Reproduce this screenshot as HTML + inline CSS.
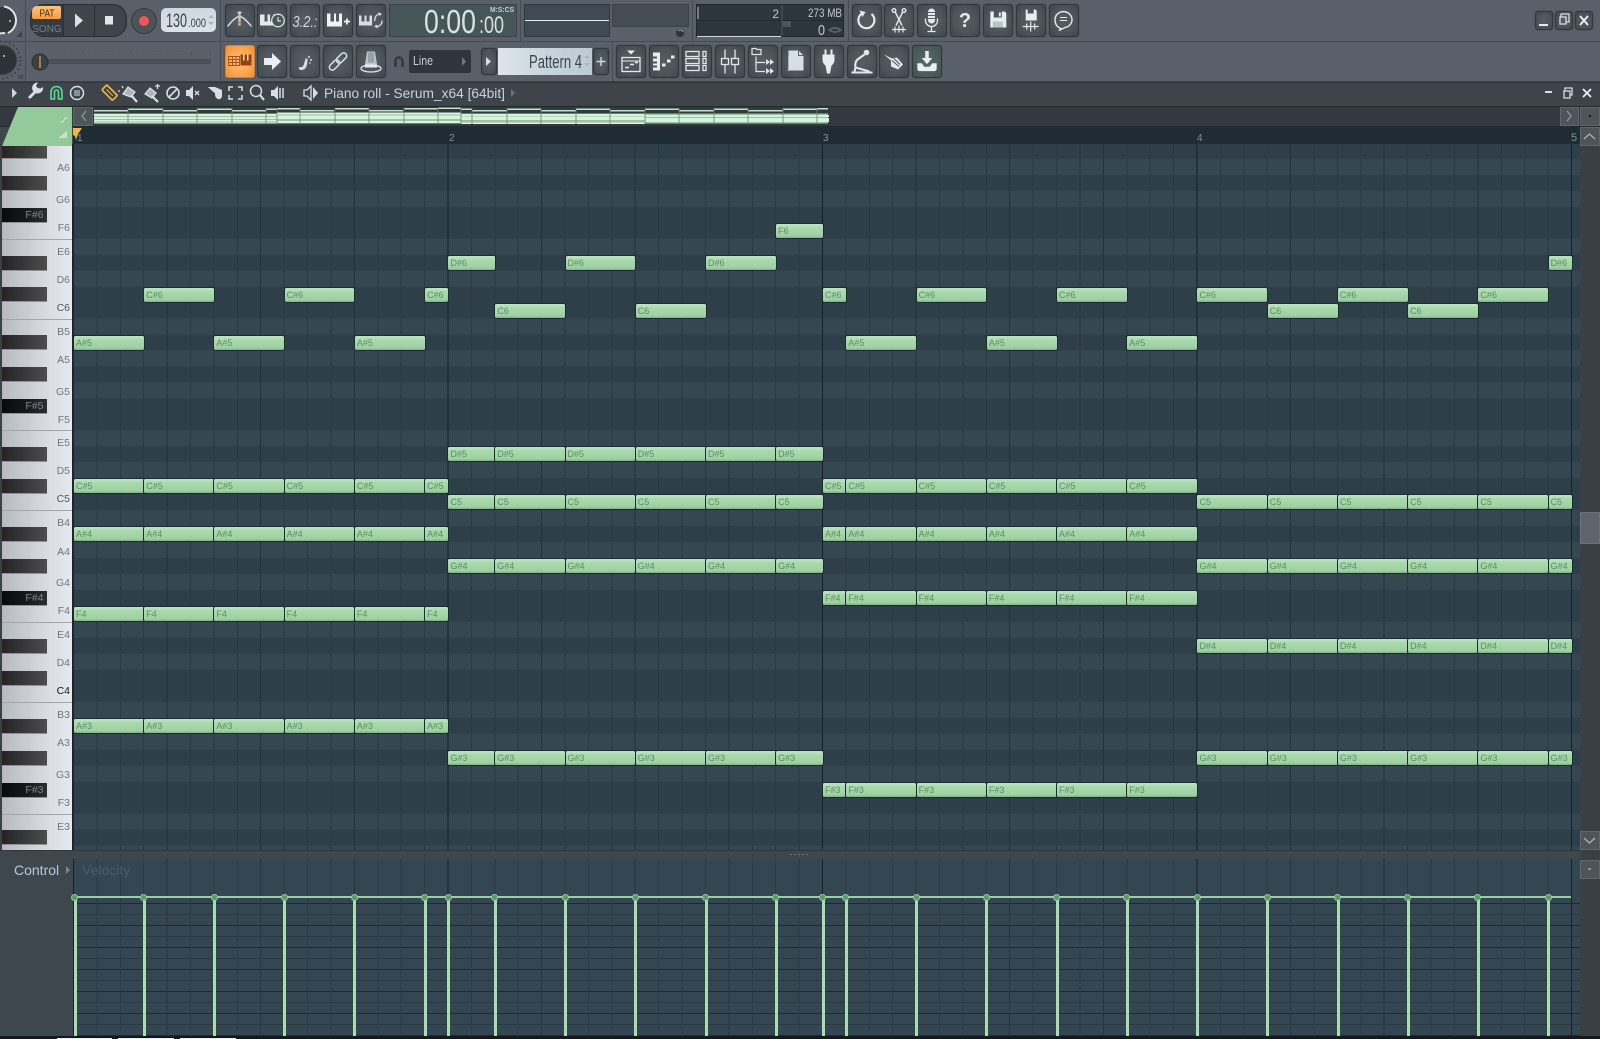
<!DOCTYPE html>
<html><head><meta charset="utf-8"><title>Piano roll</title>
<style>
html,body{margin:0;padding:0;width:1600px;height:1039px;overflow:hidden;background:#3f464c;font-family:"Liberation Sans",sans-serif}
div,i,b,u,em{position:absolute;display:block;font-style:normal;text-decoration:none;font-weight:normal}
p{margin:0;position:absolute;left:0;top:0}
.tb{left:0;top:0;width:1600px;height:82px;background:#596069}
.hl{left:0;width:1600px;height:1px;background:#464c53}
.vl{width:1px;background:#464c53}
.btn{width:30px;height:33px;border-radius:3px;box-sizing:border-box;border:1px solid #33383d;background:radial-gradient(ellipse at center,#565d63 0,#4d545a 55%,#3f454b 100%);box-shadow:0 0 0 .5px #4a5057}
.r1{top:4px}.r2{top:45px}
.or{background:radial-gradient(ellipse at center,#ffc078 0,#fba64f 60%,#f08c35 100%);border-color:#e07f2c}
.grid{left:73px;top:144px;width:1507px;height:706px;
background-image:
repeating-linear-gradient(90deg,#14202a 0 1px,transparent 1px 374.5px),
repeating-linear-gradient(90deg,#25323b 0 1px,transparent 1px 93.625px),
repeating-linear-gradient(90deg,#2b3a44 0 1px,transparent 1px 23.406px),
linear-gradient(180deg,#354751 0 15.97px,#2f3f49 15.97px 31.94px,#354751 31.94px 47.91px,#2f3f49 47.91px 63.88px,#354751 63.88px 79.85px,#2f3f49 79.85px 111.79px,#354751 111.79px 127.76px,#2f3f49 127.76px 143.73px,#354751 143.73px 159.7px,#2f3f49 159.7px 191.64px);
background-size:auto,auto,auto,100% 191.64px;background-position:0 0,0 0,0 0,0 174.53px}
.vel{left:73px;top:859px;width:1507px;height:177px;
background-image:
repeating-linear-gradient(90deg,#14202a 0 1px,transparent 1px 374.5px),
repeating-linear-gradient(90deg,#28353e 0 1px,transparent 1px 93.625px),
repeating-linear-gradient(90deg,#2d3c46 0 1px,transparent 1px 23.406px),
repeating-linear-gradient(180deg,#1f2b33 0 1px,transparent 1px 22px),
repeating-linear-gradient(180deg,#2a3842 0 1px,transparent 1px 11px);
background-color:#344651;background-position:0 0,0 0,0 0,0 44px,0 44px;background-size:auto,auto,auto,100% 22px,100% 11px}
.velmask{left:73px;top:859px;width:1507px;height:38px;background-image:repeating-linear-gradient(90deg,#14202a 0 1px,transparent 1px 374.5px),repeating-linear-gradient(90deg,#28353e 0 1px,transparent 1px 93.625px),repeating-linear-gradient(90deg,#2d3c46 0 1px,transparent 1px 23.406px);background-color:#344651}
i{--l:3;left:calc(74px + var(--s)*23.406px);top:calc(335.5px + var(--n)*15.97px);width:calc(var(--l)*23.406px - .4px);height:14px;border-radius:1.5px;box-sizing:border-box;background:linear-gradient(180deg,#bde5c0 0,#a9d9ae 30%,#9ed0a3 85%,#7fb085 100%);box-shadow:0 0 0 1px #1d2b33;color:#5a8f64;font-size:9px;line-height:14px;padding-left:2px;white-space:nowrap;overflow:hidden}
.piano{left:2px;top:144px;width:70px;height:706px;background:linear-gradient(90deg,#b6b9bf 0,#d2d5da 50%,#e6eaf0 100%)}
.sep{left:2px;width:70px;height:1px;background:#a3a7ad;top:calc(334.5px + var(--n)*15.97px)}
u{left:2px;width:44.5px;height:15px;top:calc(335.4px + var(--n)*15.97px);background:linear-gradient(90deg,#242424 0,#343434 40%,#4d4d4d 100%);border-bottom:1px solid #8d9095;box-sizing:border-box}
u.f{background:linear-gradient(90deg,#07090c 0,#15171a 50%,#2c2e32 100%);color:#808489;font-size:10.5px;line-height:14px;text-align:right;padding-right:3px}
em{left:30px;width:40px;text-align:right;font-size:10.5px;line-height:14px;color:#6c7783;top:calc(336.2px + var(--n)*15.97px + var(--o));--o:0px}
.A{--o:.8px}.G{--o:.5px}.F{--o:-3.4px}.E{--o:4.3px}.D{--o:.4px}.C{--o:-3.6px}.B{--o:4.5px}
b{left:calc(72.6px + var(--s)*23.406px);top:897px;width:3px;height:139px;background:#a9dcae}
b:before{content:"";position:absolute;left:-2.5px;top:-3.5px;width:5px;height:5px;border-radius:50%;background:#5c9768;border:1.5px solid #93c99b}
.title{left:0;top:82px;width:1600px;height:24px;background:#3e444a;border-top:1px solid #33383d;box-sizing:border-box}
.ov{left:0;top:106px;width:1600px;height:21px;background:#32393f;border-top:1px solid #24292e;border-bottom:1px solid #242a2f;box-sizing:border-box}
.rul{left:73px;top:127px;width:1507px;height:17px;background:#1f2c34;color:#7f8f9a;font-size:10px;line-height:23px}
.rul span{position:absolute;top:0}
.sbtn{background:#4d545a;border:1px solid #5f666c;box-sizing:border-box}
</style></head><body>

<div class="tb"></div>
<div class="hl" style="top:41px"></div>
<div style="left:0;top:81px;width:1600px;height:1px;background:#3a4045"></div>
<div class="vl" style="left:25px;top:0;height:81px"></div>
<div class="vl" style="left:220px;top:0;height:81px"></div>
<div class="vl" style="left:520px;top:0;height:41px"></div>
<div class="vl" style="left:692px;top:0;height:41px"></div>
<div class="vl" style="left:848px;top:0;height:41px"></div>
<div class="vl" style="left:612px;top:41px;height:40px"></div>

<div style="left:30px;top:4px;width:97px;height:33px;border-radius:14px;background:#353b41;border:1px solid #2a2f33;box-sizing:border-box"></div>
<div style="left:63px;top:5px;width:31px;height:31px;background:#3f454b;border-left:1px solid #2a2f33;box-sizing:border-box"></div>
<div style="left:94px;top:5px;width:31px;height:31px;background:#3f454b;border-left:1px solid #2a2f33;border-radius:0 13px 13px 0;box-sizing:border-box"></div>
<div style="left:32px;top:6px;width:29px;height:13px;background:linear-gradient(180deg,#ffc27c,#f99b3f);border-radius:5px 2px 2px 2px"></div>
<div style="left:131px;top:8px;width:26px;height:26px;border-radius:50%;background:#4b5258;border:1px solid #363b40;box-sizing:border-box"></div>
<div style="left:139px;top:16px;width:10px;height:10px;border-radius:50%;background:#f2545c"></div>
<div style="left:161px;top:8px;width:55px;height:24px;border-radius:5px;background:linear-gradient(180deg,#cdd8df,#dbe3e8)"></div>

<div class="btn r1" style="left:225px"></div><div class="btn r1" style="left:257px"></div><div class="btn r1" style="left:290px"></div><div class="btn r1" style="left:323px"></div><div class="btn r1" style="left:356px"></div>
<div class="btn r2 or" style="left:225px"></div><div class="btn r2" style="left:257px"></div><div class="btn r2" style="left:290px"></div><div class="btn r2" style="left:323px"></div><div class="btn r2" style="left:356px"></div>

<div style="left:389px;top:4px;width:128px;height:33px;background:#465558;border:1px solid #3a4549;box-sizing:border-box"></div>
<div style="left:524px;top:4px;width:86px;height:33px;background:#3f4a52;border:1px solid #30383e;box-sizing:border-box"></div>
<div style="left:525px;top:20px;width:84px;height:1px;background:#e6edf0"></div>
<div style="left:612px;top:4px;width:77px;height:23px;background:#454d54;border:1px solid #3a4147;box-sizing:border-box"></div>
<div style="left:696px;top:4px;width:148px;height:33px;background:#2d363d;border:1px solid #20262b;box-sizing:border-box"></div>
<div style="left:697px;top:20px;width:146px;height:1px;background:#222a30"></div>
<div style="left:781px;top:5px;width:2px;height:31px;background:#3c464d"></div>
<div style="left:697px;top:36px;width:84px;height:1px;background:#cfd8dc"></div>

<div class="btn r1" style="left:852px"></div><div class="btn r1" style="left:884px"></div><div class="btn r1" style="left:917px"></div><div class="btn r1" style="left:950px"></div><div class="btn r1" style="left:983px"></div><div class="btn r1" style="left:1016px"></div><div class="btn r1" style="left:1049px"></div>
<div class="btn" style="left:1535px;top:11px;width:18px;height:19px"></div><div class="btn" style="left:1555px;top:11px;width:18px;height:19px"></div><div class="btn" style="left:1575px;top:11px;width:18px;height:19px"></div>

<div style="left:48px;top:59px;width:163px;height:5px;background:#4a5157;border-radius:2px;border:1px solid #464c53;box-sizing:border-box"></div>
<div style="left:409px;top:50px;width:62px;height:23px;background:#2f353a;border-radius:2px"></div>
<div class="btn" style="left:481px;top:48px;width:16px;height:27px"></div>
<div style="left:498px;top:48px;width:94px;height:27px;background:linear-gradient(90deg,#dde6ea 0,#c9d5dc 50%,#bccad3 100%)"></div>
<div class="btn" style="left:593px;top:48px;width:16px;height:27px"></div>

<div class="btn r2" style="left:616px"></div><div class="btn r2" style="left:649px"></div><div class="btn r2" style="left:682px"></div><div class="btn r2" style="left:715px"></div><div class="btn r2" style="left:748px"></div><div class="btn r2" style="left:781px"></div><div class="btn r2" style="left:814px"></div><div class="btn r2" style="left:847px"></div><div class="btn r2" style="left:879px"></div><div class="btn r2" style="left:912px;background:radial-gradient(ellipse at center,#586a6c 0,#4c5c5e 60%,#41504f 100%)"></div>

<div class="title"></div>
<div class="ov"></div>
<div class="sbtn" style="left:73px;top:107px;width:20px;height:19px"></div>
<div class="sbtn" style="left:1560px;top:107px;width:19px;height:19px"></div>
<div class="sbtn" style="left:1580px;top:107px;width:20px;height:19px"></div>

<div class="rul"><span style="left:4px">1</span><span style="left:376px">2</span><span style="left:750px">3</span><span style="left:1124px">4</span><span style="left:1498px;font-size:11px">5</span></div>

<div class="piano"></div>
<div style="left:0;top:144px;width:2px;height:706px;background:#3a4046"></div>
<div class="sep" style="--n:-6"></div><div class="sep" style="--n:-1"></div><div class="sep" style="--n:6"></div><div class="sep" style="--n:11"></div><div class="sep" style="--n:18"></div><div class="sep" style="--n:23"></div><div class="sep" style="--n:30"></div>
<u style="--n:-12"></u><u style="--n:-10"></u><u class="f" style="--n:-8">F#6</u><u style="--n:-5"></u><u style="--n:-3"></u><u style="--n:0"></u><u style="--n:2"></u><u class="f" style="--n:4">F#5</u><u style="--n:7"></u><u style="--n:9"></u><u style="--n:12"></u><u style="--n:14"></u><u class="f" style="--n:16">F#4</u><u style="--n:19"></u><u style="--n:21"></u><u style="--n:24"></u><u style="--n:26"></u><u class="f" style="--n:28">F#3</u><u style="--n:31"></u>
<em class="A" style="--n:-11">A6</em><em class="G" style="--n:-9">G6</em><em class="F" style="--n:-7">F6</em><em class="E" style="--n:-6">E6</em><em class="D" style="--n:-4">D6</em><em class="C" style="--n:-2;color:#4d5761">C6</em><em class="B" style="--n:-1">B5</em>
<em class="A" style="--n:1">A5</em><em class="G" style="--n:3">G5</em><em class="F" style="--n:5">F5</em><em class="E" style="--n:6">E5</em><em class="D" style="--n:8">D5</em><em class="C" style="--n:10;color:#4d5761">C5</em><em class="B" style="--n:11">B4</em>
<em class="A" style="--n:13">A4</em><em class="G" style="--n:15">G4</em><em class="F" style="--n:17">F4</em><em class="E" style="--n:18">E4</em><em class="D" style="--n:20">D4</em><em class="C" style="--n:22;color:#15191d">C4</em><em class="B" style="--n:23">B3</em>
<em class="A" style="--n:25">A3</em><em class="G" style="--n:27">G3</em><em class="F" style="--n:29">F3</em><em class="E" style="--n:30">E3</em>

<div class="grid"></div>
<div style="left:72px;top:144px;width:1.5px;height:706px;background:#1a252c"></div>

<p style="--n:-7"><i style="--s:30;--l:2">F6</i></p>
<p style="--n:-5"><i style="--s:16;--l:2">D#6</i><i style="--s:21">D#6</i><i style="--s:27">D#6</i><i style="--s:63;--l:1">D#6</i></p>
<p style="--n:-3"><i style="--s:3">C#6</i><i style="--s:9">C#6</i><i style="--s:15;--l:1">C#6</i><i style="--s:32;--l:1">C#6</i><i style="--s:36">C#6</i><i style="--s:42">C#6</i><i style="--s:48">C#6</i><i style="--s:54">C#6</i><i style="--s:60">C#6</i></p>
<p style="--n:-2"><i style="--s:18">C6</i><i style="--s:24">C6</i><i style="--s:51">C6</i><i style="--s:57">C6</i></p>
<p style="--n:0"><i style="--s:0">A#5</i><i style="--s:6">A#5</i><i style="--s:12">A#5</i><i style="--s:33">A#5</i><i style="--s:39">A#5</i><i style="--s:45">A#5</i></p>
<p style="--n:7"><i style="--s:16;--l:2">D#5</i><i style="--s:18">D#5</i><i style="--s:21">D#5</i><i style="--s:24">D#5</i><i style="--s:27">D#5</i><i style="--s:30;--l:2">D#5</i></p>
<p style="--n:9"><i style="--s:0">C#5</i><i style="--s:3">C#5</i><i style="--s:6">C#5</i><i style="--s:9">C#5</i><i style="--s:12">C#5</i><i style="--s:15;--l:1">C#5</i><i style="--s:32;--l:1">C#5</i><i style="--s:33">C#5</i><i style="--s:36">C#5</i><i style="--s:39">C#5</i><i style="--s:42">C#5</i><i style="--s:45">C#5</i></p>
<p style="--n:10"><i style="--s:16;--l:2">C5</i><i style="--s:18">C5</i><i style="--s:21">C5</i><i style="--s:24">C5</i><i style="--s:27">C5</i><i style="--s:30;--l:2">C5</i><i style="--s:48">C5</i><i style="--s:51">C5</i><i style="--s:54">C5</i><i style="--s:57">C5</i><i style="--s:60">C5</i><i style="--s:63;--l:1">C5</i></p>
<p style="--n:12"><i style="--s:0">A#4</i><i style="--s:3">A#4</i><i style="--s:6">A#4</i><i style="--s:9">A#4</i><i style="--s:12">A#4</i><i style="--s:15;--l:1">A#4</i><i style="--s:32;--l:1">A#4</i><i style="--s:33">A#4</i><i style="--s:36">A#4</i><i style="--s:39">A#4</i><i style="--s:42">A#4</i><i style="--s:45">A#4</i></p>
<p style="--n:14"><i style="--s:16;--l:2">G#4</i><i style="--s:18">G#4</i><i style="--s:21">G#4</i><i style="--s:24">G#4</i><i style="--s:27">G#4</i><i style="--s:30;--l:2">G#4</i><i style="--s:48">G#4</i><i style="--s:51">G#4</i><i style="--s:54">G#4</i><i style="--s:57">G#4</i><i style="--s:60">G#4</i><i style="--s:63;--l:1">G#4</i></p>
<p style="--n:16"><i style="--s:32;--l:1">F#4</i><i style="--s:33">F#4</i><i style="--s:36">F#4</i><i style="--s:39">F#4</i><i style="--s:42">F#4</i><i style="--s:45">F#4</i></p>
<p style="--n:17"><i style="--s:0">F4</i><i style="--s:3">F4</i><i style="--s:6">F4</i><i style="--s:9">F4</i><i style="--s:12">F4</i><i style="--s:15;--l:1">F4</i></p>
<p style="--n:19"><i style="--s:48">D#4</i><i style="--s:51">D#4</i><i style="--s:54">D#4</i><i style="--s:57">D#4</i><i style="--s:60">D#4</i><i style="--s:63;--l:1">D#4</i></p>
<p style="--n:24"><i style="--s:0">A#3</i><i style="--s:3">A#3</i><i style="--s:6">A#3</i><i style="--s:9">A#3</i><i style="--s:12">A#3</i><i style="--s:15;--l:1">A#3</i></p>
<p style="--n:26"><i style="--s:16;--l:2">G#3</i><i style="--s:18">G#3</i><i style="--s:21">G#3</i><i style="--s:24">G#3</i><i style="--s:27">G#3</i><i style="--s:30;--l:2">G#3</i><i style="--s:48">G#3</i><i style="--s:51">G#3</i><i style="--s:54">G#3</i><i style="--s:57">G#3</i><i style="--s:60">G#3</i><i style="--s:63;--l:1">G#3</i></p>
<p style="--n:28"><i style="--s:32;--l:1">F#3</i><i style="--s:33">F#3</i><i style="--s:36">F#3</i><i style="--s:39">F#3</i><i style="--s:42">F#3</i><i style="--s:45">F#3</i></p>

<div style="left:0;top:850px;width:1600px;height:9px;background:#3f464c;border-top:1px solid #2f353a;box-sizing:border-box"></div>
<div style="left:790px;top:854px;width:20px;height:1px;background:repeating-linear-gradient(90deg,#6a7177 0 2px,transparent 2px 4px)"></div>
<div style="left:0;top:859px;width:73px;height:177px;background:#3f474e"></div>
<div class="vel"></div><div class="velmask"></div>
<div style="left:14px;top:861px;font-size:14px;line-height:18px;color:#b4c8d8">Control</div>
<div style="left:82px;top:861px;font-size:14px;line-height:18px;color:#4a5a65">Velocity</div>
<div style="left:74px;top:896px;width:1497px;height:2px;background:#9ad0a0"></div>
<b style="--s:0;left:73.5px"></b><b style="--s:3"></b><b style="--s:6"></b><b style="--s:9"></b><b style="--s:12"></b><b style="--s:15"></b><b style="--s:16"></b><b style="--s:18"></b><b style="--s:21"></b><b style="--s:24"></b><b style="--s:27"></b><b style="--s:30"></b><b style="--s:32"></b><b style="--s:33"></b><b style="--s:36"></b><b style="--s:39"></b><b style="--s:42"></b><b style="--s:45"></b><b style="--s:48"></b><b style="--s:51"></b><b style="--s:54"></b><b style="--s:57"></b><b style="--s:60"></b><b style="--s:63"></b>

<div style="left:1580px;top:127px;width:20px;height:909px;background:#3a3f44"></div>
<div class="sbtn" style="left:1580px;top:127px;width:20px;height:19px"></div>
<div class="sbtn" style="left:1580px;top:512px;width:20px;height:32px;background:#5d646b;border-color:#6b7279"></div>
<div class="sbtn" style="left:1580px;top:831px;width:20px;height:19px"></div>
<div class="sbtn" style="left:1580px;top:860px;width:20px;height:19px"></div>
<div style="left:0;top:1036px;width:1600px;height:3px;background:#15191c"></div>
<div style="left:57px;top:1038px;width:55px;height:1px;background:#e8e8e8"></div>
<div style="left:118px;top:1038px;width:56px;height:1px;background:#e8e8e8"></div>
<div style="left:180px;top:1038px;width:56px;height:1px;background:#e8e8e8"></div>

<svg width="1600" height="1039" viewBox="0 0 1600 1039" style="position:absolute;left:0;top:0" font-family="Liberation Sans" fill="none">
<!-- left knobs -->
<circle cx="3" cy="20" r="13" fill="#30363b"/>
<path d="M4 6.5A14 14 0 0 1 8 33" stroke="#dfe6ea" stroke-width="2"/>
<path d="M-2 33.5L5 33" stroke="#dfe6ea" stroke-width="2"/>
<circle cx="10" cy="21" r="1" fill="#c8d0d5"/>
<path d="M22 31v6h-6z" fill="#3c4248"/>
<circle cx="2" cy="60" r="15" fill="#2c3237" stroke="#4c5359"/>
<circle cx="2" cy="60" r="18.5" stroke="#3a4046" stroke-width="2" stroke-dasharray="1.5 3"/>
<circle cx="4" cy="56" r="1" fill="#c8d0d5"/>
<text x="18" y="79" font-size="6" fill="#30363b">W</text>
<circle cx="40" cy="62" r="8" fill="#3a4046" stroke="#2c3136"/>
<path d="M40 56v12" stroke="#f49a3c" stroke-width="1.3"/>
<path d="M60 54v1M71 54v1M83 52v3M95 54v1M107 54v1M119 54v1M131 52v3M143 54v1M155 54v1M167 54v1M179 54v1M191 52v3M210 52v3" stroke="#484e55"/>

<!-- transport -->
<text x="47" y="16.5" text-anchor="middle" font-size="10.5" fill="#3a2a14" textLength="15" lengthAdjust="spacingAndGlyphs">PAT</text>
<text x="47" y="32" text-anchor="middle" font-size="10" fill="#757c83">SONG</text>
<path d="M75 13.5l8 7-8 7z" fill="#d8e2e8"/>
<rect x="105" y="16" width="8" height="8.5" fill="#dfe7ec"/>
<text x="166" y="27" font-size="19" fill="#38444e" textLength="21" lengthAdjust="spacingAndGlyphs">130</text>
<text x="188" y="27" font-size="12" fill="#38444e" textLength="18" lengthAdjust="spacingAndGlyphs">.000</text>
<path d="M208 18l3-3 3 3zM208 22l3 3 3-3z" fill="#a9b4bc"/>

<!-- row1 icons 1 -->
<g transform="translate(239.5 20.5)" stroke="#d4dfe6" stroke-width="1.4"><path d="M-12 6Q-4-4 0-4T12 6"/><path d="M0-9V5" stroke="#c9c3b8" stroke-width="2.4"/><path d="M-2-8h4"/><circle cx="0" cy="2" r="1.3" fill="#e68a3d" stroke="none"/></g>
<g transform="translate(272 20.5)"><path d="M-12-6v11h16v-11h-3v7h-3v-7h-2.5v7h-3v-7z" fill="#e2eaef"/><circle cx="6" cy="0" r="6.3" fill="#4c5359" stroke="#d4dfe6" stroke-width="1.3"/><path d="M6-3.5V.5H9" stroke="#d4dfe6" stroke-width="1.2"/></g>
<text x="292.500" y="27" font-size="16" font-style="italic" fill="#cdd9e0" textLength="25" lengthAdjust="spacingAndGlyphs">3.2.:</text>
<g transform="translate(338 20.5)"><path d="M-11-7v13h15v-13h-3v8h-3v-8h-2v8h-3.5v-8z" fill="#eef3f6"/><path d="M6 1h6M9-2v6" stroke="#eef3f6" stroke-width="1.8"/></g>
<g transform="translate(371 20.5)"><path d="M-12-5v10h13v-10h-2.500v6h-3v-6h-2v6h-3v-6z" fill="#d4dfe6"/><path d="M9-6.500A5.500 5.500 0 0 0 4 .5M5 6A5.500 5.500 0 0 0 11 0" stroke="#d4dfe6" stroke-width="1.300"/><path d="M7-8.500l4 2-2.500 2zM7 8l-4-2 3-2z" fill="#d4dfe6"/></g>

<!-- row2 icons 1 -->
<g transform="translate(239.5 61.5)"><path d="M-11-5h11v9h-11zM-11-2h11M-11 1h11M-7-5v9M-3.5-5v9" stroke="#a2511c" stroke-width=".9"/><path d="M1-7h11V4H1z" fill="#8f4414"/><path d="M3.5-7v6h1.500v-6zM7.500-7v6h1.500v-6z" fill="#ffd9a8"/></g>
<path d="M264 58h8v-5l9 8.500-9 8.500v-5h-8z" fill="#e8f0f5"/>
<g fill="#d4dfe6"><path d="M299 67q4 1 5-3t2-6l1.600 1q0 4-1.200 7.500t-5 3.500q-3 0-2.400-3z"/><circle cx="309" cy="57" r="1"/><circle cx="311" cy="60" r="1"/><circle cx="310" cy="63" r=".8"/></g>
<g transform="translate(338 61.5) rotate(-45)" stroke="#d4dfe6" stroke-width="1.500"><rect x="-11" y="-3" width="12" height="6" rx="3"/><rect x="-1" y="-3" width="12" height="6" rx="3"/></g>
<g transform="translate(371 61.5)"><path d="M-4-10h8l2 13h-12z" fill="#b9c4cb"/><path d="M-2-9v10M0-9v10M2-9v10" stroke="#6a7379" stroke-width=".9"/><ellipse cx="0" cy="7" rx="10" ry="3.500" stroke="#dfe7ec" stroke-width="1.300"/><path d="M-6 3h12v3h-12z" fill="#e5ebef"/></g>

<!-- time -->
<text x="424" y="33" font-size="33" fill="#d6e3e3" textLength="52" lengthAdjust="spacingAndGlyphs">0:00</text>
<text x="479" y="33" font-size="24" fill="#d6e3e3" textLength="25" lengthAdjust="spacingAndGlyphs">:00</text>
<text x="490" y="12" font-size="7" font-weight="bold" fill="#c5d0d0" textLength="24" lengthAdjust="spacingAndGlyphs">M:S:CS</text>
<circle cx="680" cy="33" r="4.500" fill="#2e3439" stroke="#565d63"/>
<path d="M678 31a3 3 0 0 1 5 1" stroke="#9aa2a8"/>
<path d="M698 7v12" stroke="#b9c4cb"/>
<text x="779" y="18" text-anchor="end" font-size="12" fill="#bfc9d0">2</text>
<text x="842" y="17" text-anchor="end" font-size="12" fill="#bfc9d0" textLength="34" lengthAdjust="spacingAndGlyphs">273 MB</text>
<text x="825" y="35" text-anchor="end" font-size="15" fill="#bfc9d0" textLength="7" lengthAdjust="spacingAndGlyphs">0</text>
<rect x="783" y="21" width="8" height="6" fill="#4c555c"/>
<path d="M829 30q6-4 12 0 -6 4-12 0z" stroke="#5a636a" stroke-width="1.600"/>

<!-- right row1 icons -->
<g transform="translate(866.5 20.5)" stroke="#e2eaef" stroke-width="2.200"><path d="M-4.500-7A8 8 0 1 0 5-6.500"/><path d="M-7-10l6 1.500-3 5z" fill="#e2eaef" stroke="none"/></g>
<g transform="translate(899 20.5)" stroke="#e2eaef" stroke-width="1.400"><path d="M-4-9L3 5M4-9L-3 5"/><circle cx="-5" cy="-10" r="1.800"/><circle cx="5" cy="-10" r="1.800"/><path d="M-7 9h14M-4 6v6M0 5v7M4 6v6" stroke-width="1.200"/></g>
<g transform="translate(931.5 20.5)"><rect x="-3.500" y="-12" width="7" height="15" rx="3.500" fill="#e2eaef"/><path d="M-3.500-8h7M-3.500-5h7M-3.500-2h7" stroke="#5a6167"/><path d="M-6-2v2a6 6 0 0 0 12 0v-2M0 6v5M-4 11h8" stroke="#e2eaef" stroke-width="1.300"/></g>
<text x="965" y="27" text-anchor="middle" font-size="20" fill="#e2eaef" font-weight="bold">?</text>
<g transform="translate(997.8 20.5)"><path d="M-7-9H7l1.500 2v14h-16v-16z" fill="#e6edf1"/><rect x="-4" y="-9" width="8" height="6" fill="#4c5359"/><rect x="1" y="-8" width="2" height="4" fill="#e6edf1"/><rect x="-5" y="1" width="10" height="6" fill="#b8c2c9"/></g>
<g transform="translate(1030.7 20.5)"><path d="M-5-11H5l1 1.500v9.500H-5z" fill="#e6edf1"/><rect x="-3" y="-11" width="6" height="4" fill="#4c5359"/><path d="M-8 6h16M-4 3v6M0 1v10M4 3v6" stroke="#e2eaef" stroke-width="1.200"/></g>
<g transform="translate(1064 20.5)" stroke="#dfe7ec" stroke-width="1.400"><path d="M-3 8Q-9 6-9-1A8.500 8 0 1 1 1 7L-5 10Z"/><path d="M-4-3h7M-4 0h7" stroke-width="1.100"/></g>

<!-- win controls -->
<path d="M1539 25h9" stroke="#e2eaef" stroke-width="2"/>
<path d="M1561 17v-3h8v8h-3M1560 17h6v7h-6z" stroke="#d4dfe6" stroke-width="1.300"/>
<path d="M1580 16l8 9M1588 16l-8 9" stroke="#eef3f6" stroke-width="1.800"/>

<!-- row 2 -->
<text x="413" y="65" font-size="12.500" fill="#c5d0d8" textLength="20" lengthAdjust="spacingAndGlyphs">Line</text>
<path d="M462 57l4 4.500-4 4.500z" fill="#6f787f"/>
<path d="M394 67v-6a5 5 0 0 1 10 0v6h-3v-6a2 2 0 0 0-4 0v6z" fill="#383e44"/>
<path d="M486 57l5 4.500-5 4.500z" fill="#d4dfe6"/>
<text x="529" y="68" font-size="18" fill="#3a4650" textLength="53" lengthAdjust="spacingAndGlyphs">Pattern 4</text>
<path d="M584 58l3-3 3 3zM584 63l3 3 3-3z" fill="#a9b4bc"/>
<path d="M601 57v9M596.500 61.500h9" stroke="#cfd9df" stroke-width="1.400"/>

<g transform="translate(631 61.500)"><path d="M-4-11h8l-4 4z" fill="#e6edf1"/><rect x="-9" y="-4" width="18" height="14" stroke="#e2eaef" stroke-width="1.300"/><path d="M-9-.5H9" stroke="#e2eaef"/><path d="M-6 6h4M-1 3h4M4 1h3" stroke="#e2eaef" stroke-width="1.600"/></g>
<g transform="translate(664 61.500)" fill="#e6edf1"><path d="M-11-9h7v18h-7z"/><path d="M-11-5h4v2h-4zM-11 0h4v2h-4zM-11 4h4v2h-4z" fill="#4c5359"/><rect x="-2" y="2" width="3.500" height="3"/><rect x="3" y="-2" width="3.500" height="3"/><rect x="7" y="-6" width="3.500" height="3"/></g>
<g transform="translate(697 61.500)" stroke="#dfe7ec" stroke-width="1.300"><rect x="-11" y="-10" width="13" height="5"/><rect x="-11" y="-3" width="13" height="5"/><rect x="-11" y="4" width="13" height="5"/><rect x="6" y="-10" width="3" height="5"/><rect x="6" y="-3" width="3" height="5"/><rect x="6" y="4" width="3" height="5"/></g>
<g transform="translate(730 61.500)" stroke="#dfe7ec" stroke-width="1.300"><path d="M-5-12V12M5-12V12"/><rect x="-8.500" y="-3" width="7" height="6" fill="#4c5359"/><rect x="1.500" y="-3" width="7" height="6" fill="#4c5359"/></g>
<g transform="translate(763 61.500)" stroke="#dfe7ec" stroke-width="1.200"><path d="M-11-10v-3h4l1 1h4v5h-9z"/><path d="M-7-5V10H2M-7 1H2"/><path d="M3-2l4 3-4 3zM3 7l4 3-4 3zM7-2l4 3-4 3zM7 7l4 3-4 3z" fill="#dfe7ec" stroke="none" transform="translate(0 -.5)"/></g>
<g transform="translate(795.500 61.500)"><path d="M-7-11H3l5 5v15H-7z" fill="#d6dfe5"/><path d="M3-11v5h5" stroke="#5a6167"/><path d="M-7-6v15h-1" stroke="#a9b4bc"/></g>
<g transform="translate(828.500 61.500)" fill="#e6edf1"><rect x="-4" y="-12" width="2" height="5"/><rect x="2" y="-12" width="2" height="5"/><path d="M-6-7H6v5q0 4-3 6l-1.500 8h-3L-3 4q-3-2-3-6z"/></g>
<g transform="translate(861.500 61.500)"><circle cx="5" cy="-9" r="2.800" fill="#dfe7ec"/><path d="M3-7L-4-2Q-7 1-6 6L-7 10" stroke="#dfe7ec" stroke-width="2.200"/><path d="M-6 6L8 10M-10 11H11" stroke="#dfe7ec" stroke-width="2"/></g>
<g transform="translate(894 61.500)"><path d="M-10-7L-2-3 3-4 9 3 4 8-3 5-3-1Z" fill="#dfe7ec"/><path d="M-2-1L5 5M0-3L6 3" stroke="#4c5359"/></g>
<g transform="translate(927 61.500) scale(.88)" fill="#e8f0f4"><path d="M-2-12h4v8h4l-6 7-6-7h4z"/><path d="M-11 2h5l3 4h6l3-4h5v6q0 3-3 3h-16q-3 0-3-3z"/></g>

<!-- title bar -->
<path d="M12 88l5 5-5 5z" fill="#cdd8df"/>
<path d="M29 98l8-8" stroke="#d4dfe6" stroke-width="3"/>
<path d="M43 87a5.500 5.500 0 1 1-5-4.500l-2 3 1.500 2.500 3 .5z" fill="#d4dfe6"/>
<path d="M51 99v-7a5.500 5.500 0 0 1 11 0v7h-3.500v-7a2 2 0 0 0-4 0v7z" fill="none" stroke="#55dd90" stroke-width="1.600"/>
<circle cx="77" cy="93" r="6.500" stroke="#d4dfe6" stroke-width="1.500"/><path d="M74 91h6M74 93h6M74 95h6" stroke="#d4dfe6"/>
<g transform="translate(110 93) rotate(-45)"><rect x="-3.500" y="-8" width="7" height="15" rx="1.200" stroke="#f0b43c" stroke-width="1.700"/><path d="M0-5v9" stroke="#f0b43c"/></g>
<g stroke="#d4dfe6" stroke-width="1.300"><path d="M123 94l5-7 7 5-4 5z" fill="#a9b4bc"/><path d="M131 95l6 7" stroke-width="2.200"/><path d="M123 88l-1-2M120 91l-2 0"/></g>
<g stroke="#d4dfe6" stroke-width="1.300"><path d="M145 94l5-6 6 5-4 5z" fill="#a9b4bc"/><path d="M152 96l6 6" stroke-width="2.200"/><path d="M155 86h5M157.500 84v5"/></g>
<circle cx="173" cy="93" r="6" stroke="#d4dfe6" stroke-width="1.600"/><path d="M169 97l8-8" stroke="#d4dfe6" stroke-width="1.600"/>
<path d="M186 90h3l4-4v14l-4-4h-3z" fill="#d4dfe6"/><path d="M195 91l4 4M199 91l-4 4" stroke="#d4dfe6" stroke-width="1.300"/>
<path d="M207 87h8l7 3v7q-2 3-4 2-3-1-3-5z" fill="#d4dfe6"/><path d="M207 87l8 7" stroke="#3e444a"/>
<g stroke="#d4dfe6" stroke-width="1.500"><path d="M229 91v-4h4M238 87h4v4M242 95v4h-4M233 99h-4v-4"/></g>
<circle cx="256" cy="91" r="5.500" stroke="#d4dfe6" stroke-width="1.500"/><path d="M260 95l4 5" stroke="#d4dfe6" stroke-width="2.200"/>
<path d="M271 90h3l4-4v14l-4-4h-3z" fill="#d4dfe6"/><path d="M280 88v10M283 88v10" stroke="#d4dfe6" stroke-width="1.500"/>
<path d="M304 90h3l4-4v14l-4-4h-3z" stroke="#d4dfe6" stroke-width="1.300"/><path d="M313 87l5 6-5 6z" fill="#d4dfe6"/>
<text x="324" y="98" font-size="13.500" fill="#c5d3dd" textLength="181" lengthAdjust="spacingAndGlyphs">Piano roll - Serum_x64 [64bit]</text>
<path d="M511 89l4 4-4 4z" fill="#6a7177"/>
<path d="M1545 92h7" stroke="#d4dfe6" stroke-width="2"/>
<path d="M1565 91v-3h7v7h-2M1564 91h6v7h-6z" stroke="#d4dfe6" stroke-width="1.300"/>
<path d="M1583 89l8 8M1591 89l-8 8" stroke="#e6edf1" stroke-width="1.800"/>

<!-- overview -->
<path d="M86 111l-4 5 4 5" stroke="#8d959b" stroke-width="1.300"/>
<path d="M1567 111l4 5-4 5" stroke="#8d959b" stroke-width="1.300"/>
<rect x="1589" y="115" width="2" height="2" fill="#15191c"/>
<rect x="94" y="113.500" width="734" height="10" fill="#9cc2a6"/>
<g fill="#d6f3db">
<rect x="94" y="114" width="183" height="2"/><rect x="94" y="117" width="183" height="2"/><rect x="94" y="120" width="183" height="1.500"/><rect x="94" y="122.500" width="183" height="1"/>
<rect x="277" y="112.500" width="184" height="2"/><rect x="277" y="115.500" width="184" height="3.500"/><rect x="277" y="121" width="184" height="2"/>
<rect x="461" y="114" width="184" height="2.500"/><rect x="461" y="117" width="184" height="3"/><rect x="461" y="122.500" width="184" height="1.500"/>
<rect x="645" y="115" width="184" height="2"/><rect x="645" y="118" width="184" height="4"/>
</g>
<g fill="#c4e0ca">
<rect x="94" y="110" width="34" height="1.500"/><rect x="128.500" y="108.500" width="34" height="1.500"/><rect x="163" y="110" width="34" height="1.500"/><rect x="197.500" y="108.500" width="34" height="1.500"/><rect x="232" y="110" width="34" height="1.500"/><rect x="266" y="108.500" width="11" height="1.500"/>
<rect x="277" y="108" width="23" height="1.500"/><rect x="300" y="110" width="34" height="1.500"/><rect x="335" y="108" width="34" height="1.500"/><rect x="369" y="110" width="34" height="1.500"/><rect x="404" y="108" width="34" height="1.500"/><rect x="438" y="107.500" width="23" height="1.500"/>
<rect x="461" y="108.500" width="11" height="1.500"/><rect x="472.500" y="110" width="34" height="1.500"/><rect x="507" y="108.500" width="34" height="1.500"/><rect x="541.500" y="110" width="34" height="1.500"/><rect x="576" y="108.500" width="34" height="1.500"/><rect x="610.500" y="110" width="34" height="1.500"/>
<rect x="645" y="108.500" width="34" height="1.500"/><rect x="679.500" y="110" width="34" height="1.500"/><rect x="714" y="108.500" width="34" height="1.500"/><rect x="748.500" y="110" width="34" height="1.500"/><rect x="783" y="108.500" width="34" height="1.500"/><rect x="817" y="108" width="11" height="1.500"/>
</g>
<path d="M128 108v16M163 108v16M197 108v16M232 108v16M266 108v16M277 108v16M300 108v16M335 108v16M369 108v16M404 108v16M438 108v16M461 108v16M472 108v16M507 108v16M541 108v16M576 108v16M610 108v16M645 108v16M679 108v16M714 108v16M748 108v16M783 108v16M817 108v16" stroke="#6a8273" stroke-width=".8"/>

<!-- corner -->
<path d="M18 107H72V146H2z" fill="#93c99b"/>
<path d="M60 122h3l2-4h3" stroke="#c4e4c8" stroke-width="1.300"/>
<path d="M58 138l9-7v7z" fill="#c4e4c8"/>
<path d="M73 128h9l-4 6-2 6-1-4-2-1z" fill="#f0b94a"/>
<path d="M1584 139l5.500-5 5.500 5" stroke="#aab2b8" stroke-width="1.300"/>
<path d="M1584 838l5.500 5 5.500-5" stroke="#aab2b8" stroke-width="1.300"/>
<path d="M1588 869h3" stroke="#aab2b8" stroke-width="1.300"/>
<path d="M66 866l4 4-4 4z" fill="#7a8790"/>
</svg>
</body></html>
